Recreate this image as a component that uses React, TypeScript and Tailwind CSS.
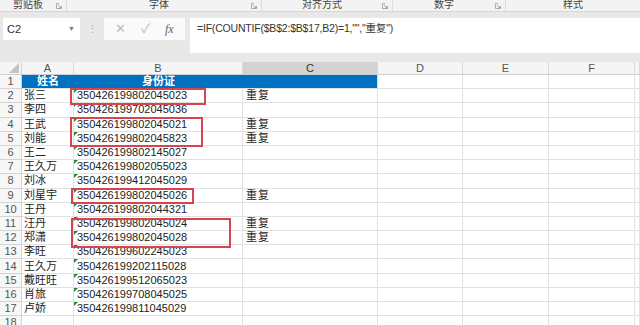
const font = "font-[Liberation_Sans,Noto_Sans_CJK_SC,sans-serif]";

const data: [string, string, string][] = [
  ["张三", "350426199802045023", "重复"],
  ["李四", "350426199702045036", ""],
  ["王武", "350426199802045021", "重复"],
  ["刘能", "350426199802045823", "重复"],
  ["王二", "350426199802145027", ""],
  ["王久万", "350426199802055023", ""],
  ["刘冰", "350426199412045029", ""],
  ["刘星宇", "350426199802045026", "重复"],
  ["王丹", "350426199802044321", ""],
  ["汪丹", "350426199802045024", "重复"],
  ["郑潇", "350426199802045028", "重复"],
  ["李旺", "350426199602245023", ""],
  ["王久万", "350426199202115028", ""],
  ["戴旺旺", "350426199512065023", ""],
  ["肖旅", "350426199708045025", ""],
  ["卢娇", "350426199811045029", ""],
];

const groups = [
  { label: "剪贴板", w: "w-[67px]", launcher: true },
  { label: "字体", w: "w-[195px]", launcher: true },
  { label: "对齐方式", w: "w-[131px]", launcher: true },
  { label: "数字", w: "w-[113px]", launcher: true },
  { label: "样式", w: "flex-1", launcher: false },
];

function Launcher() {
  return (
    <svg width="6" height="6" viewBox="0 0 6 6" className="mr-[4px] mt-[3px]">
      <path d="M0.5 0.5 H3 M0.5 0.5 V5.5 H5.5 V3" stroke="#999" strokeWidth="0.8" fill="none" />
      <path d="M2 2 L5 5 M5 3.2 V5 H3.2" stroke="#999" strokeWidth="0.8" fill="none" />
    </svg>
  );
}

function Ribbon() {
  return (
    <div className="flex h-[12px] bg-[#f3f3f3] border-b border-[#d6d6d6] overflow-hidden">
      {groups.map((g) => (
        <div key={g.label} className={`${g.w} flex items-start border-r border-[#dcdcdc] last:border-r-0`}>
          <div className="flex-1 text-center text-[10px] leading-[9px] text-[#444]">{g.label}</div>
          {g.launcher && <Launcher />}
        </div>
      ))}
    </div>
  );
}

function FormulaBar() {
  return (
    <div className="flex items-start h-[50px] bg-[#e8e8e8] pt-[6px] pl-[3px]">
      <div className="w-[77px] h-[22px] bg-white flex items-center justify-between pl-[4px] pr-[5px]">
        <span className="text-[11px] text-[#333]">C2</span>
        <span className="text-[7px] text-[#777]">▼</span>
      </div>
      <div className="w-[24px] h-[22px] flex items-center justify-center text-[11px] text-[#aaa]">⋮</div>
      <div className="w-[81px] h-[22px] bg-[#fafafa] flex items-center justify-around px-[4px]">
        <span className="text-[13px] text-[#bbb]">✕</span>
        <span className="text-[13px] text-[#bbb]">✓</span>
        <span className="text-[12px] italic text-[#666] font-[Liberation_Serif,serif]">fx</span>
      </div>
      <div className="ml-[5px] flex-1 h-[35px] bg-white pl-[7px] pt-[3px] text-[10.5px] tracking-[-0.2px] text-[#333] leading-[14px]">
        =IF(COUNTIF($B$2:$B$17,B2)=1,"","重复")
      </div>
    </div>
  );
}

const cols = "grid grid-cols-[22px_52px_169px_135px_85px_86px_86px_1fr]";

function ColumnHeader() {
  const letters = ["A", "B", "C", "D", "E", "F", ""];
  return (
    <div className={`${cols} h-[13px] bg-[#f5f5f5] border-b border-[#cfcfcf]`}>
      <div className="flex items-end justify-end pr-[2px] pb-[1px] border-r border-[#d4d4d4]">
        <svg width="10" height="10" viewBox="0 0 10 10">
          <polygon points="10,0 10,10 0,10" fill="#c4c4c4" />
        </svg>
      </div>
      {letters.map((l, i) => (
        <div
          key={i}
          className={`flex items-center justify-center text-[11px] leading-none border-r border-[#d9d9d9] ${
            l === "C" ? "bg-[#d3d3d3] text-[#333]" : "text-[#555]"
          }`}
        >
          {l}
        </div>
      ))}
    </div>
  );
}

function Tri() {
  return (
    <svg width="4" height="4" viewBox="0 0 4 4" className="absolute left-0 top-0">
      <polygon points="0,0 4,0 0,4" fill="#1f8a3c" />
    </svg>
  );
}

function RowNum({ n }: { n: number }) {
  return (
    <div className="flex items-center justify-center border-r border-b border-[#d4d4d4] bg-[#f7f7f7] text-[11px] leading-none text-[#555]">
      {n}
    </div>
  );
}

const cell = "border-r border-b border-[#e1e1e1] flex items-center text-[11px] leading-none text-[#222] whitespace-nowrap overflow-hidden";

function Sheet() {
  return (
    <div className="relative">
      <ColumnHeader />
      <div className={`${cols} h-[14.2px]`}>
        <RowNum n={1} />
        <div className="bg-[#0070c0] border-b border-[#e1e1e1] flex items-center justify-center text-[11px] leading-none font-bold text-white">
          姓名
        </div>
        <div className="bg-[#0070c0] border-b border-[#e1e1e1] flex items-center justify-center text-[11px] leading-none font-bold text-white">
          身份证
        </div>
        <div className="bg-[#0070c0] border-r border-b border-[#e1e1e1]" />
        <div className={cell} />
        <div className={cell} />
        <div className={cell} />
        <div className={cell} />
      </div>
      {data.map(([name, id, dup], i) => (
        <div key={i} className={`${cols} h-[14.2px]`}>
          <RowNum n={i + 2} />
          <div className={`${cell} pl-[2px]`}>{name}</div>
          <div className={`${cell} relative pl-[3px]`}>
            <Tri />
            {id}
          </div>
          <div className={`${cell} relative pl-[3px] tracking-[1px]`}>
            {dup}
            {i === 0 && (
              <div className="absolute inset-[-1px] border border-[#217346]">
                <div className="absolute right-[-3px] bottom-[-3px] w-[4px] h-[4px] bg-[#217346] border border-white" />
              </div>
            )}
          </div>
          <div className={cell} />
          <div className={cell} />
          <div className={cell} />
          <div className={cell} />
        </div>
      ))}
      <div className={`${cols} h-[14.2px]`}>
        <RowNum n={18} />
        <div className={cell} />
        <div className={cell} />
        <div className={cell} />
        <div className={cell} />
        <div className={cell} />
        <div className={cell} />
        <div className={cell} />
      </div>

      {/* red highlight boxes */}
      <div className="absolute left-[70px] top-[26px] w-[136px] h-[17px] border-2 border-[#d9434d]" />
      <div className="absolute left-[70px] top-[55px] w-[133px] h-[30px] border-2 border-[#d9434d]" />
      <div className="absolute left-[71px] top-[126px] w-[123px] h-[16px] border-2 border-[#d9434d]" />
      <div className="absolute left-[71px] top-[156px] w-[160px] h-[30px] border-2 border-[#d9434d]" />
    </div>
  );
}

export default function App() {
  return (
    <div className={`w-[640px] h-[325px] overflow-hidden bg-white ${font}`}>
      <Ribbon />
      <FormulaBar />
      <Sheet />
    </div>
  );
}
